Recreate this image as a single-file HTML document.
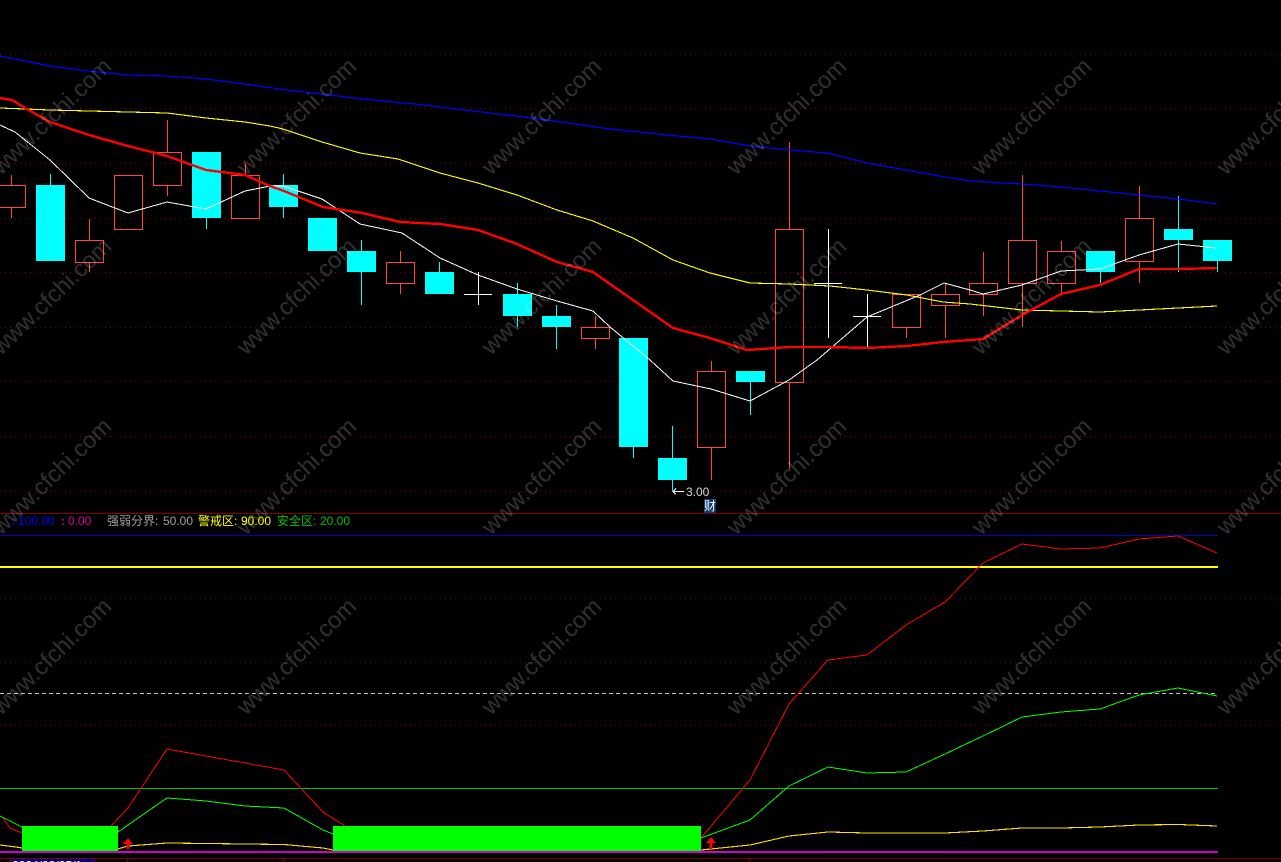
<!DOCTYPE html>
<html><head><meta charset="utf-8"><title>K线图</title>
<style>
html,body{margin:0;padding:0;background:#000;width:1281px;height:862px;overflow:hidden}
svg{display:block;position:absolute;left:0;top:0}
text{font-family:"Liberation Sans","Noto Sans CJK SC",sans-serif}
</style></head><body>
<svg width="1281" height="862" viewBox="0 0 1281 862" xmlns="http://www.w3.org/2000/svg">
<rect width="1281" height="862" fill="#000"/>
<g shape-rendering="crispEdges" fill="none">
<path d="M0 54.5H1281M0 108.5H1281M0 163.5H1281M0 218.5H1281M0 272.5H1281M0 327.5H1281M0 381.5H1281M0 436.5H1281M0 491.5H1281M0 598.5H1281M0 662.5H1281M0 725.5H1281" stroke="#800000" stroke-width="1" stroke-dasharray="1 4"/>
<path d="M0 513.5H1281" stroke="#800000"/>
<path d="M0 535.5H1218" stroke="#0000c8"/>
<path d="M0 693.5H1218" stroke="#c0c0c0" stroke-dasharray="4 3"/>
<path d="M0 567H1218" stroke="#ffff00" stroke-width="2"/>
<path d="M0 788.5H1218" stroke="#00c000"/>
<!-- red candles -->
<path stroke="#ff4444" d="M-3 185.5H25.5V207.5H-3M11.5 175V185M11.5 207V218M75.5 240.5h28v22h-28zM89.5 219v21M89.5 262v10M114.5 175.5h28v54h-28zM153.5 152.5h28v33h-28zM167.5 120v32M167.5 185v11M231.5 175.5h28v43h-28zM245.5 164v11M386.5 262.5h28v21h-28zM400.5 251v11M400.5 283v11M581.5 327.5h28v11h-28zM595.5 316v11M595.5 338v11M697.5 371.5h28v76h-28zM711.5 361v10M711.5 447v33M775.5 229.5h28v153h-28zM789.5 142v87M789.5 382v87M892.5 294.5h28v33h-28zM906.5 327v11M931.5 294.5h28v11h-28zM945.5 283v11M945.5 305v33M969.5 283.5h28v11h-28zM983.5 252v31M983.5 294v22M1008.5 240.5h28v43h-28zM1022.5 175v65M1022.5 283v44M1047.5 251.5h28v32h-28zM1061.5 241v10M1061.5 283v11M1125.5 218.5h28v43h-28zM1139.5 186v32M1139.5 261v22"/>
<!-- cyan wicks -->
<path stroke="#00ffff" d="M50.500 174v11M206.500 218v11M283.500 174v44M361.500 240v65M439.500 262v10M517.500 283v44M556.500 305v44M633.500 447v11M672.500 426v65M750.500 382v33M1100.500 272v11M1178.500 196v76M1217.500 261v11"/>
<!-- cyan bodies -->
<g fill="#00ffff" stroke="none">
<rect x="36" y="185" width="29" height="76"/>
<rect x="192" y="152" width="29" height="66"/>
<rect x="269" y="185" width="29" height="22"/>
<rect x="308" y="218" width="29" height="33"/>
<rect x="347" y="251" width="29" height="21"/>
<rect x="425" y="272" width="29" height="22"/>
<rect x="503" y="294" width="29" height="22"/>
<rect x="542" y="316" width="29" height="11"/>
<rect x="619" y="338" width="29" height="109"/>
<rect x="658" y="458" width="29" height="22"/>
<rect x="736" y="371" width="29" height="11"/>
<rect x="1086" y="251" width="29" height="21"/>
<rect x="1164" y="229" width="29" height="11"/>
<rect x="1203" y="240" width="29" height="21"/>
</g>
<!-- doji -->
<path stroke="#ffffff" d="M464 294.500H492M478.500 272V305M814 283.500H842M828.500 229V338M853 316.500H881M867.500 294V347"/>
<!-- MA lines -->
<polyline stroke="#0000ff" stroke-width="1.2" points="0,56 50,66 89,71 128,75 167,76 206,79 245,84 287,90 363,99 415,104 490,113 533,118 610,129 667,135 711,139 750,146 790,150 827,153 867,163 906,170 945,177 970,181 1022,184 1061,187 1100,191 1139,195 1178,199 1217,204"/>
<polyline stroke="#ffff00" stroke-width="1.1" points="0,108 50,110 128,112 167,113 206,118 245,122 270,126 283,129 322,142 360,153 398,159 440,173 478,183 517,195 557,210 593,221 600,224 633,238 673,260 710,273 750,283 790,284 830,286 867,290 907,295 943,302 970,304 1022,310 1061,311 1100,312 1139,310 1178,308 1217,306"/>
<polyline stroke="#ffffff" stroke-width="1" points="0,125 15,132 50,160 89,198 128,213 167,202 206,209 245,191 270,186 283,186 322,199 360,224 402,233 440,258 478,275 517,289 557,301 593,311 610,327 650,360 673,381 711,389 750,401 789,380 817,360 867,317 920,295 944,283 970,290 983,294 1022,285 1061,271 1100,269 1139,255 1178,244 1217,248"/>
<polyline stroke="#ff0000" stroke-width="2.4" points="0,98 12,100 25,108 50,122 89,135 128,146 167,156 206,170 245,175 270,186 284,191 323,207 362,213 400,222 440,224 478,230 517,244 557,262 593,272 610,284 633,300 673,328 710,338 747,350 790,347 830,347 867,348 907,346 943,342 970,340 983,339 1022,315 1061,294 1100,285 1139,269 1178,269 1217,268"/>
<!-- lower pane -->
<polyline stroke="#ffe000" stroke-width="1.1" points="0,845 8,846 16,847 22,848 118,849 128,846 167,843 206,843.500 245,844 284,844.500 323,848 333,850"/>
<polyline stroke="#ffe000" stroke-width="1.1" points="701,850 750,845 789,836 828,832 867,833 906,833 945,833 983,831 1022,828 1061,828 1100,827 1139,825 1178,824.500 1217,826"/>
<polyline stroke="#ff0000" stroke-width="1" points="3,818 10,828 22,833"/>
<polyline stroke="#ff0000" stroke-width="1" points="111,826 128,808 167,749 206,756 245,763 284,770 323,812 345,826"/>
<polyline stroke="#ff0000" stroke-width="1" points="701,838 750,780 789,704 828,660 867,655 906,625 945,602 983,563 1022,544 1061,549 1100,548 1139,539 1178,536 1217,553"/>
<polyline stroke="#00ff00" stroke-width="1" points="0,816 22,827"/>
<polyline stroke="#00ff00" stroke-width="1" points="118,832 128,825 167,798 206,801 245,806 284,808 323,830 333,834"/>
<polyline stroke="#00ff00" stroke-width="1" points="701,838 750,820 789,786 828,767 867,773 906,772 945,754 983,736 1022,717 1061,712 1100,709 1139,695 1178,688 1217,696"/>
<rect x="22" y="826" width="96" height="25" fill="#00ff00" stroke="none"/>
<rect x="333" y="826" width="368" height="25" fill="#00ff00" stroke="none"/>
<path d="M0 852H1218" stroke="#d000d0" stroke-width="2"/>
<path d="M128 838L133 844H129.500V849H126.500V844H123Z" fill="#ff0000"/>
<path d="M711 837L716 843H712.500V849H709.500V843H706Z" fill="#ff0000"/>
<path d="M0 858.500H1281" stroke="#800000"/>
<rect x="11" y="859" width="83" height="3" fill="#000080" stroke="none"/>
<path d="M10.500 859V862M94.500 859V862M127.500 859V862M283.500 859V862M749.500 859V862" stroke="#800000"/>
</g>
<text x="12" y="869.500" font-size="12" fill="#fff">2024/03/25/1</text>
<!-- legend -->
<g font-size="12">
<text x="11" y="525" fill="#0000ff" font-weight="bold">:</text>
<text x="18" y="525" fill="#0000ff">100.00</text>
<text x="61" y="525" fill="#d000a0" font-weight="bold">:</text>
<text x="68" y="525" fill="#d000a0">0.00</text>
<text x="107" y="525" fill="#a0a0a0">强弱分界:</text>
<text x="163" y="525" fill="#a0a0a0">50.00</text>
<text x="198" y="525" fill="#ffff00">警戒区:</text>
<text x="241" y="525" fill="#ffff00">90.00</text>
<text x="277" y="525" fill="#00c000">安全区:</text>
<text x="320" y="525" fill="#00c000">20.00</text>
</g>
<!-- marker -->
<path d="M684 491.500H673M676 488.500L673 491.500L676 494.500" stroke="#fff" fill="none" shape-rendering="crispEdges"/>
<text x="686" y="496" font-size="12" fill="#d8d8d8">3.00</text>
<rect x="704" y="499" width="12" height="14" fill="#0a3a70"/>
<text x="704" y="510" font-size="12" fill="#fff">财</text>
<!-- watermark -->
<g font-size="23.500" fill="#ffffff" fill-opacity="0.19">
<text transform="translate(1 176) rotate(-44)">www.cfchi.com</text>
<text transform="translate(246 176) rotate(-44)">www.cfchi.com</text>
<text transform="translate(491 176) rotate(-44)">www.cfchi.com</text>
<text transform="translate(736 176) rotate(-44)">www.cfchi.com</text>
<text transform="translate(981 176) rotate(-44)">www.cfchi.com</text>
<text transform="translate(1226 176) rotate(-44)">www.cfchi.com</text>
<text transform="translate(1 356) rotate(-44)">www.cfchi.com</text>
<text transform="translate(246 356) rotate(-44)">www.cfchi.com</text>
<text transform="translate(491 356) rotate(-44)">www.cfchi.com</text>
<text transform="translate(736 356) rotate(-44)">www.cfchi.com</text>
<text transform="translate(981 356) rotate(-44)">www.cfchi.com</text>
<text transform="translate(1226 356) rotate(-44)">www.cfchi.com</text>
<text transform="translate(1 536) rotate(-44)">www.cfchi.com</text>
<text transform="translate(246 536) rotate(-44)">www.cfchi.com</text>
<text transform="translate(491 536) rotate(-44)">www.cfchi.com</text>
<text transform="translate(736 536) rotate(-44)">www.cfchi.com</text>
<text transform="translate(981 536) rotate(-44)">www.cfchi.com</text>
<text transform="translate(1226 536) rotate(-44)">www.cfchi.com</text>
<text transform="translate(1 716) rotate(-44)">www.cfchi.com</text>
<text transform="translate(246 716) rotate(-44)">www.cfchi.com</text>
<text transform="translate(491 716) rotate(-44)">www.cfchi.com</text>
<text transform="translate(736 716) rotate(-44)">www.cfchi.com</text>
<text transform="translate(981 716) rotate(-44)">www.cfchi.com</text>
<text transform="translate(1226 716) rotate(-44)">www.cfchi.com</text>
</g>
</svg>
</body></html>
